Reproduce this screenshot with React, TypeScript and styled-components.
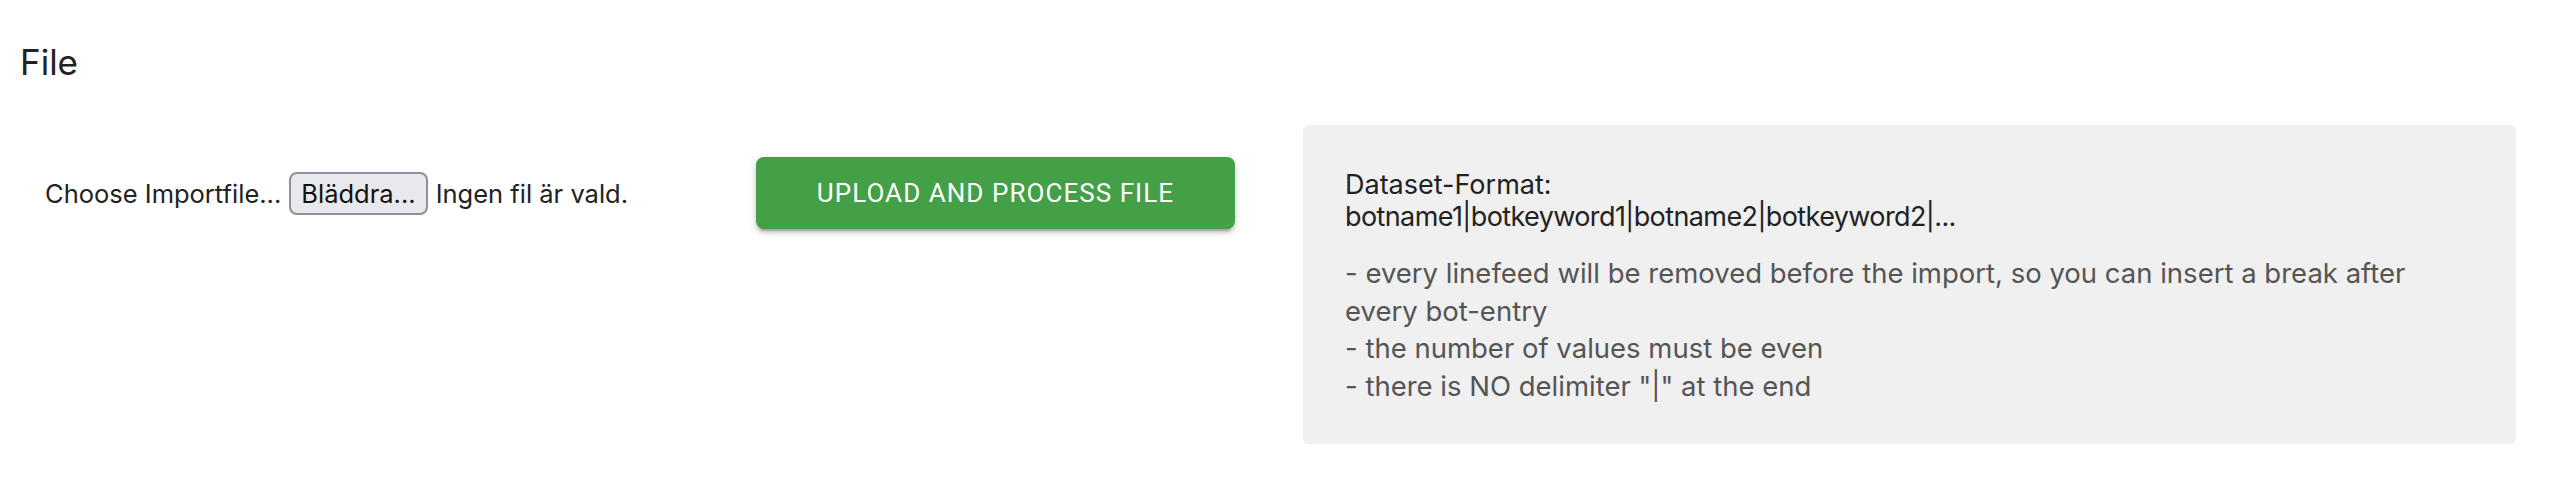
import styled, { createGlobalStyle } from "styled-components";

const GlobalStyle = createGlobalStyle`
  html, body {
    margin: 0;
    padding: 0;
    background: #fff;
  }
  body {
    font-family: Inter, "Liberation Sans", Arial, sans-serif;
    color: #222;
  }
`;

const Page = styled.div`
  padding: 0 40px 0 20px;
`;

const Title = styled.h3`
  margin: 0;
  padding-top: 40px;
  font-size: 35px;
  font-weight: 400;
  line-height: 44px;
  color: #222;
`;

const Row = styled.div`
  display: grid;
  grid-template-columns: 711px 547px 1fr;
  align-items: start;
  margin-top: 41px;
  padding-left: 25px;
`;

const Cell = styled.div`
  display: flex;
  align-items: center;
  height: 72px;
  margin-top: 32px;
`;

const Label = styled.span`
  font-size: 25.5px;
  color: #222;
`;

const BrowseButton = styled.button`
  margin: 0 8px 0 8px;
  height: 43px;
  padding: 0 10px;
  font-family: inherit;
  font-size: 25.5px;
  color: #111;
  background: #e9e9ed;
  border: 2px solid #8f8f9d;
  border-radius: 8px;
`;

const UploadButton = styled.button`
  width: 479px;
  height: 72px;
  border: 0;
  border-radius: 8px;
  background: #43a047;
  color: #fff;
  font-family: Roboto, "Liberation Sans", sans-serif;
  font-weight: 400;
  font-size: 26px;
  letter-spacing: 1.05px;
  text-transform: uppercase;
  box-shadow: 0 6px 2px -4px rgba(0, 0, 0, 0.2), 0 4px 4px 0 rgba(0, 0, 0, 0.14),
    0 2px 10px 0 rgba(0, 0, 0, 0.12);
`;

const InfoPanel = styled.div`
  background: #f0f0f0;
  border-radius: 6px;
  height: 319px;
  box-sizing: border-box;
  padding: 44px 42px 0;
`;

const FormatBlock = styled.div`
  font-size: 27px;
  line-height: 32px;
  color: #222;
`;

const Pattern = styled.span`
  letter-spacing: -0.6px;
`;

const Rules = styled.div`
  margin-top: 22px;
  font-size: 27.5px;
  line-height: 37.5px;
  color: #555;
  max-width: 1110px;
`;

export default function App() {
  return (
    <Page>
      <GlobalStyle />
      <Title>File</Title>
      <Row>
        <Cell>
          <Label>Choose Importfile...</Label>
          <BrowseButton type="button">Bläddra...</BrowseButton>
          <Label>Ingen fil är vald.</Label>
        </Cell>
        <Cell>
          <UploadButton type="button">Upload and process file</UploadButton>
        </Cell>
        <InfoPanel>
          <FormatBlock>
            Dataset-Format:
            <br />
            <Pattern>botname1|botkeyword1|botname2|botkeyword2|...</Pattern>
          </FormatBlock>
          <Rules>
            - every linefeed will be removed before the import, so you can insert a break after every bot-entry
            <br />- the number of values must be even
            <br />- there is NO delimiter "|" at the end
          </Rules>
        </InfoPanel>
      </Row>
    </Page>
  );
}
